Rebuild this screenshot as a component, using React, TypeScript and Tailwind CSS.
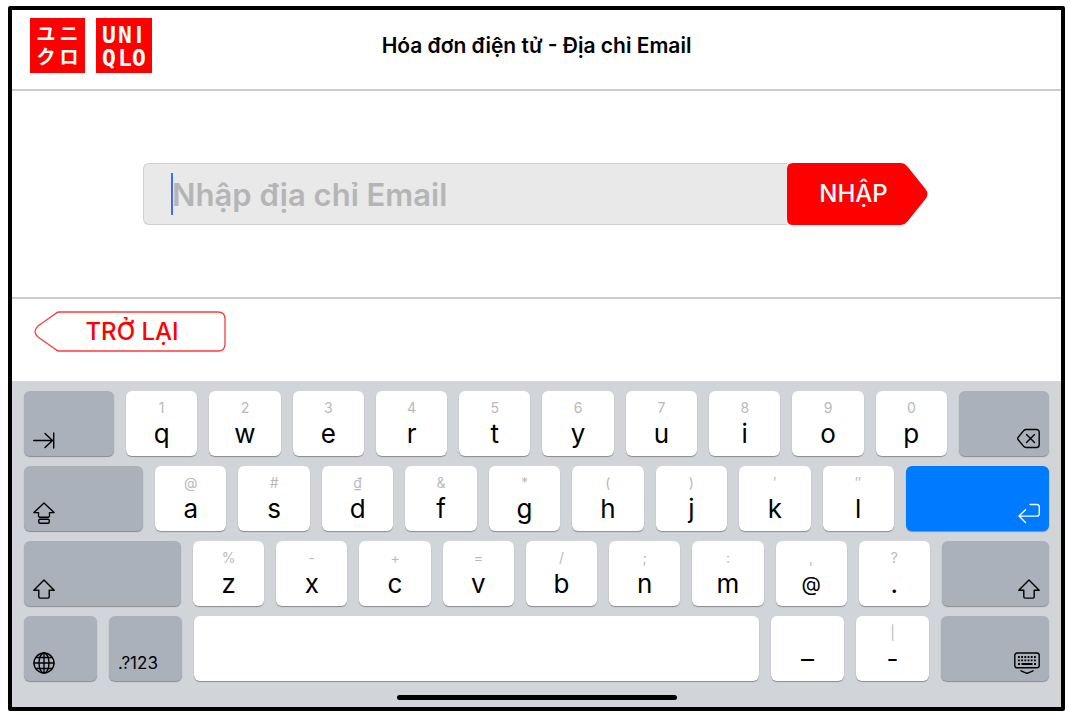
import type { ReactNode } from "react"

interface KeyData {
  label: string
  hint?: string
}

const topRow: KeyData[] = [
  { label: "q", hint: "1" },
  { label: "w", hint: "2" },
  { label: "e", hint: "3" },
  { label: "r", hint: "4" },
  { label: "t", hint: "5" },
  { label: "y", hint: "6" },
  { label: "u", hint: "7" },
  { label: "i", hint: "8" },
  { label: "o", hint: "9" },
  { label: "p", hint: "0" },
]

const homeRow: KeyData[] = [
  { label: "a", hint: "@" },
  { label: "s", hint: "#" },
  { label: "d", hint: "₫" },
  { label: "f", hint: "&" },
  { label: "g", hint: "*" },
  { label: "h", hint: "(" },
  { label: "j", hint: ")" },
  { label: "k", hint: "′" },
  { label: "l", hint: "″" },
]

const bottomRow: KeyData[] = [
  { label: "z", hint: "%" },
  { label: "x", hint: "-" },
  { label: "c", hint: "+" },
  { label: "v", hint: "=" },
  { label: "b", hint: "/" },
  { label: "n", hint: ";" },
  { label: "m", hint: ":" },
  { label: "@", hint: "," },
  { label: ".", hint: "?" },
]

function Logo() {
  return (
    <svg width="122" height="55" viewBox="0 0 122 55" role="img" aria-label="UNIQLO" className="shrink-0">
      <rect width="55" height="55" fill="#ff0000" />
      <rect x="66" width="56" height="55" fill="#ff0000" />
      <g fill="#fff" textAnchor="middle" fontWeight="700" fontSize="19" fontFamily="'Noto Sans CJK JP', sans-serif">
        <text x="16" y="23">ユ</text>
        <text x="39" y="23">ニ</text>
        <text x="16" y="46">ク</text>
        <text x="39" y="46">ロ</text>
      </g>
      <g fill="#fff" textAnchor="middle" fontWeight="700" fontSize="23" fontFamily="'DejaVu Sans Mono', monospace">
        <text x="79" y="25">U</text>
        <text x="95" y="25">N</text>
        <text x="109" y="25" fontFamily="'Liberation Sans', sans-serif">I</text>
        <text x="79" y="48">Q</text>
        <text x="95" y="48">L</text>
        <text x="109" y="48">O</text>
      </g>
    </svg>
  )
}

function Icon({ width = 22, children }: { width?: number; children: ReactNode }) {
  return (
    <svg
      width={width}
      height="22"
      viewBox={`0 0 ${width} 22`}
      fill="none"
      stroke="currentColor"
      strokeWidth="1.4"
      strokeLinecap="round"
      strokeLinejoin="round"
      aria-hidden="true"
    >
      {children}
    </svg>
  )
}

function TabIcon() {
  return (
    <Icon>
      <path d="M.7 13.5H20M12 6.5l7.5 7-7.5 7M20.7 6v15" />
    </Icon>
  )
}

function CapsIcon() {
  return (
    <Icon>
      <path d="M11 1 .9 10.6h4.6v3.2a1.5 1.5 0 0 0 1.5 1.5h8a1.5 1.5 0 0 0 1.5-1.5v-3.2h4.6z" />
      <rect x="5.8" y="17.3" width="10.4" height="4" rx="1" />
    </Icon>
  )
}

function ShiftIcon() {
  return (
    <Icon>
      <path d="M11 3 .8 13.2h5v6.6a1.3 1.3 0 0 0 1.3 1.3h7.8a1.3 1.3 0 0 0 1.3-1.3v-6.6h5z" />
    </Icon>
  )
}

function GlobeIcon() {
  return (
    <Icon>
      <circle cx="11" cy="11" r="10" />
      <ellipse cx="11" cy="11" rx="5" ry="10" />
      <path d="M11 1v20M1 11h20M3 5.5h16M3 16.5h16" />
    </Icon>
  )
}

function DeleteIcon() {
  return (
    <Icon width={23}>
      <path d="M9 2.5h10.5a2.7 2.7 0 0 1 2.7 2.7v12.600a2.7 2.7 0 0 1-2.7 2.7H9a3 3 0 0 1-2.1-.9L1.2 12.8a1.8 1.8 0 0 1 0-2.5L6.900 3.400A3 3 0 0 1 9 2.500z" />
      <path d="m9.5 7.5 8 8M17.5 7.5l-8 8" />
    </Icon>
  )
}

function ReturnIcon() {
  return (
    <Icon>
      <path d="M12 2.5h7a2.3 2.3 0 0 1 2.3 2.3v7a2.3 2.3 0 0 1-2.3 2.3H1M7.5 7.800 1 14.100l6.500 6.300" />
    </Icon>
  )
}

function HideKeyboardIcon() {
  return (
    <Icon width={26}>
      <rect x=".8" y="1" width="24.4" height="14.8" rx="2.2" />
      <path d="M4 5h18M4 8.4h18" strokeWidth="1.8" strokeDasharray="1.8 1.4" strokeLinecap="butt" />
      <path d="M4 12h2M7.5 12h11M20 12h2" strokeWidth="1.8" strokeLinecap="butt" />
      <path d="m7 18.8 6 2.6 6-2.6" />
    </Icon>
  )
}

function LetterKey({ label, hint, className = "min-w-0 flex-1" }: KeyData & { className?: string }) {
  return (
    <button
      type="button"
      className={`flex h-[65px] flex-col items-center rounded-md bg-white pt-2 shadow-[0_1px_1px_#898b8f] ${className}`}
    >
      <span className="h-[18px] text-sm leading-[18px] text-[#b9b9bb]">{hint}</span>
      <span className={`leading-[34px] text-black ${label === "@" ? "text-xl" : "text-[26px]"}`}>{label}</span>
    </button>
  )
}

interface ActionKeyProps {
  label: string
  className: string
  children: ReactNode
}

function ActionKey({ label, className, children }: ActionKeyProps) {
  return (
    <button
      type="button"
      aria-label={label}
      className={`flex h-[65px] shrink-0 items-end rounded-md px-[9px] pb-[7px] shadow-[0_1px_1px_#898b8f] ${className}`}
    >
      {children}
    </button>
  )
}

function Keyboard() {
  return (
    <section className="flex flex-col gap-2.5 bg-[#d1d4d9] px-3 pt-2.5 pb-[7px]">
      <div className="flex gap-3">
        <ActionKey label="Tab" className="w-[90px] bg-[#abb1bb]">
          <TabIcon />
        </ActionKey>
        {topRow.map((key) => (
          <LetterKey key={key.label} {...key} />
        ))}
        <ActionKey label="Delete" className="w-[90px] justify-end bg-[#abb1bb]">
          <DeleteIcon />
        </ActionKey>
      </div>
      <div className="flex gap-3">
        <ActionKey label="Caps lock" className="w-[119px] bg-[#abb1bb]">
          <CapsIcon />
        </ActionKey>
        {homeRow.map((key) => (
          <LetterKey key={key.label} {...key} />
        ))}
        <ActionKey label="Return" className="w-[143px] justify-end bg-[#007aff] text-white">
          <ReturnIcon />
        </ActionKey>
      </div>
      <div className="flex gap-3">
        <ActionKey label="Shift" className="w-[157px] bg-[#abb1bb]">
          <ShiftIcon />
        </ActionKey>
        {bottomRow.map((key) => (
          <LetterKey key={key.label} {...key} />
        ))}
        <ActionKey label="Shift" className="w-[107px] justify-end bg-[#abb1bb]">
          <ShiftIcon />
        </ActionKey>
      </div>
      <div className="flex gap-3">
        <ActionKey label="Next keyboard" className="w-[73px] bg-[#abb1bb]">
          <GlobeIcon />
        </ActionKey>
        <ActionKey label=".?123" className="w-[73px] bg-[#abb1bb]">
          <span className="text-[17px] leading-[22px]">.?123</span>
        </ActionKey>
        <button
          type="button"
          aria-label="Space"
          className="h-[65px] min-w-0 flex-1 rounded-md bg-white shadow-[0_1px_1px_#898b8f]"
        />
        <LetterKey label="–" className="w-[73px]" />
        <LetterKey label="-" hint="|" className="w-[73px]" />
        <ActionKey label="Hide keyboard" className="w-[108px] justify-end bg-[#abb1bb]">
          <HideKeyboardIcon />
        </ActionKey>
      </div>
      <div className="mt-1 h-[5px] w-[280px] self-center rounded-full bg-black" />
    </section>
  )
}

export default function App() {
  return (
    <div className="bg-white pt-1.5 pr-[5px] pb-1 pl-2 font-['Inter','Liberation_Sans',sans-serif] text-black">
      <main className="rounded-xs border-4 border-black bg-white">
        <header className="grid h-[81px] grid-cols-[1fr_auto_1fr] items-center border-b-2 border-[#cccccc] px-[18px] pb-2">
          <Logo />
          <h1 className="text-[21px] leading-7 font-semibold">Hóa đơn điện tử - Địa chỉ Email</h1>
        </header>

        <form
          className="flex border-b-2 border-[#cccccc] py-[72px] pr-[133px] pl-[131px]"
          onSubmit={(e) => e.preventDefault()}
        >
          <div className="relative min-w-0 flex-1">
            <input
              type="email"
              aria-label="Nhập địa chỉ Email"
              placeholder="Nhập địa chỉ Email"
              className="h-[62px] w-full rounded-l-md border border-r-0 border-[#cfcfcf] bg-[#e9e9e9] pl-7 text-[31px] font-semibold outline-none placeholder:text-[#b5b5b7]"
            />
            <span className="absolute top-2.5 left-7 h-[42px] w-0.5 bg-[#3f6cf5]" />
          </div>
          <button type="submit" className="relative h-[62px] w-[141px] shrink-0 pr-2 text-2xl font-medium text-white">
            <svg viewBox="0 0 141 62" className="absolute inset-0 h-full w-full" aria-hidden="true">
              <path
                d="M6 0h108q3.5 0 6 3l18.5 23q4 5 0 10L120 59q-2.500 3-6 3H6q-6 0-6-6V6q0-6 6-6z"
                fill="#ff0000"
              />
            </svg>
            <span className="relative">NHẬP</span>
          </button>
        </form>

        <div className="flex px-[22px] pt-3 pb-[29px]">
          <button type="button" className="relative h-[41px] w-48 pl-1 text-2xl font-medium text-[#ff0000]">
            <svg viewBox="0 0 192 41" className="absolute inset-0 h-full w-full" aria-hidden="true">
              <path
                d="M25 1h159q7 0 7 7v25q0 7-7 7H25q-2 0-4-2L4 26q-6-5.5 0-11L21 3q2-2 4-2z"
                fill="#fff"
                stroke="#ff3b3b"
                strokeWidth="1.3"
              />
            </svg>
            <span className="relative">TRỞ LẠI</span>
          </button>
        </div>

        <Keyboard />
      </main>
    </div>
  )
}
